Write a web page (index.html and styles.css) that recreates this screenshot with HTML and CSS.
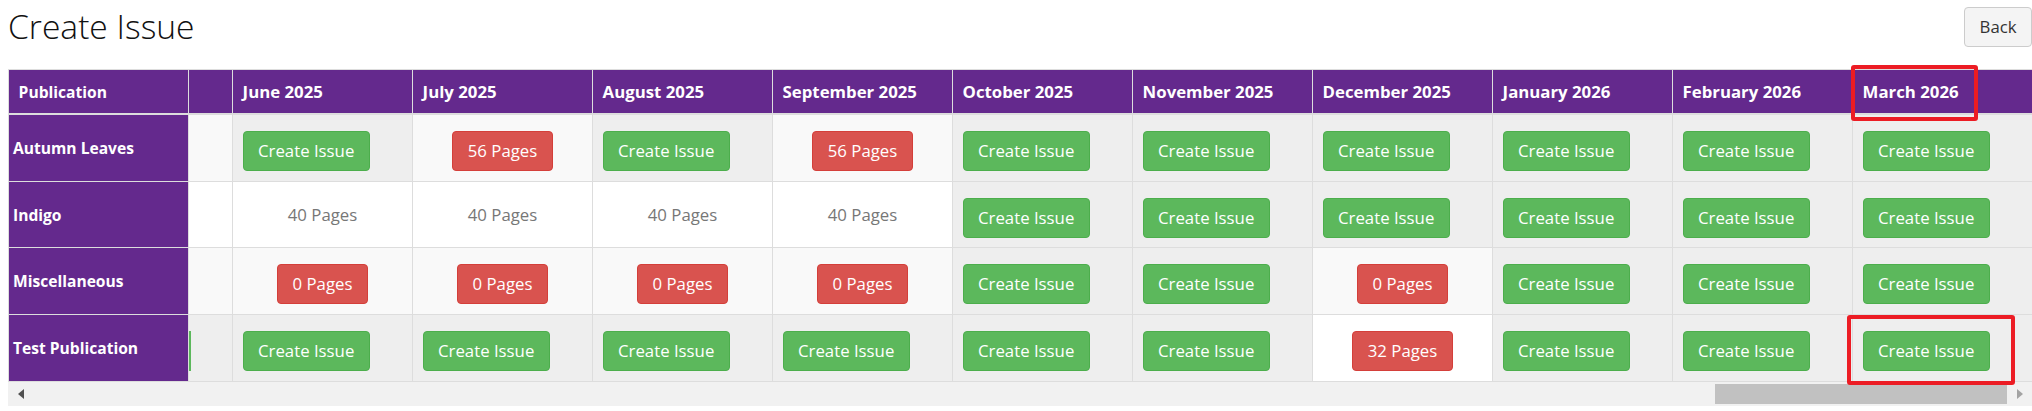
FILE: index.html
```html
<!DOCTYPE html>
<html lang="en">
<head>
    <meta charset="UTF-8">
    <meta name="viewport" content="width=device-width, initial-scale=1.0">
    <title>Create Issue</title>
    <link rel="stylesheet" href="styles.css">
</head>
<body>
    <div class="page">
        <div class="page-head">
            <h1>Create Issue</h1>
            <button class="btn btn-default">Back</button>
        </div>
        <div class="grid">
            <table class="issues">
                <colgroup>
                    <col class="col-pub">
                    <col class="col-cut">
                    <col span="10" class="col-month">
                </colgroup>
                <thead>
                    <tr>
                        <th class="pub">Publication</th>
                        <th class="cut"></th>
                        <th>June 2025</th>
                        <th>July 2025</th>
                        <th>August 2025</th>
                        <th>September 2025</th>
                        <th>October 2025</th>
                        <th>November 2025</th>
                        <th>December 2025</th>
                        <th>January 2026</th>
                        <th>February 2026</th>
                        <th class="marked">March 2026<span class="mark mark-head"></span></th>
                    </tr>
                </thead>
                <tbody>
                    <tr>
                        <th class="pub">Autumn Leaves</th>
                        <td class="cut"></td>
                        <td class="avail"><button class="btn btn-success">Create Issue</button></td>
                        <td><button class="btn btn-danger">56 Pages</button></td>
                        <td class="avail"><button class="btn btn-success">Create Issue</button></td>
                        <td><button class="btn btn-danger">56 Pages</button></td>
                        <td class="avail"><button class="btn btn-success">Create Issue</button></td>
                        <td class="avail"><button class="btn btn-success">Create Issue</button></td>
                        <td class="avail"><button class="btn btn-success">Create Issue</button></td>
                        <td class="avail"><button class="btn btn-success">Create Issue</button></td>
                        <td class="avail"><button class="btn btn-success">Create Issue</button></td>
                        <td class="avail"><button class="btn btn-success">Create Issue</button></td>
                    </tr>
                    <tr>
                        <th class="pub">Indigo</th>
                        <td class="cut"></td>
                        <td class="pages">40 Pages</td>
                        <td class="pages">40 Pages</td>
                        <td class="pages">40 Pages</td>
                        <td class="pages">40 Pages</td>
                        <td class="avail"><button class="btn btn-success">Create Issue</button></td>
                        <td class="avail"><button class="btn btn-success">Create Issue</button></td>
                        <td class="avail"><button class="btn btn-success">Create Issue</button></td>
                        <td class="avail"><button class="btn btn-success">Create Issue</button></td>
                        <td class="avail"><button class="btn btn-success">Create Issue</button></td>
                        <td class="avail"><button class="btn btn-success">Create Issue</button></td>
                    </tr>
                    <tr>
                        <th class="pub">Miscellaneous</th>
                        <td class="cut"></td>
                        <td><button class="btn btn-danger">0 Pages</button></td>
                        <td><button class="btn btn-danger">0 Pages</button></td>
                        <td><button class="btn btn-danger">0 Pages</button></td>
                        <td><button class="btn btn-danger">0 Pages</button></td>
                        <td class="avail"><button class="btn btn-success">Create Issue</button></td>
                        <td class="avail"><button class="btn btn-success">Create Issue</button></td>
                        <td><button class="btn btn-danger">0 Pages</button></td>
                        <td class="avail"><button class="btn btn-success">Create Issue</button></td>
                        <td class="avail"><button class="btn btn-success">Create Issue</button></td>
                        <td class="avail"><button class="btn btn-success">Create Issue</button></td>
                    </tr>
                    <tr>
                        <th class="pub">Test Publication</th>
                        <td class="cut avail"><span class="btn-tail"></span></td>
                        <td class="avail"><button class="btn btn-success">Create Issue</button></td>
                        <td class="avail"><button class="btn btn-success">Create Issue</button></td>
                        <td class="avail"><button class="btn btn-success">Create Issue</button></td>
                        <td class="avail"><button class="btn btn-success">Create Issue</button></td>
                        <td class="avail"><button class="btn btn-success">Create Issue</button></td>
                        <td class="avail"><button class="btn btn-success">Create Issue</button></td>
                        <td><button class="btn btn-danger">32 Pages</button></td>
                        <td class="avail"><button class="btn btn-success">Create Issue</button></td>
                        <td class="avail"><button class="btn btn-success">Create Issue</button></td>
                        <td class="avail marked"><button class="btn btn-success">Create Issue</button><span class="mark mark-cell"></span></td>
                    </tr>
                </tbody>
            </table>
            <div class="hscroll">
                <span class="hscroll-btn hscroll-left"></span>
                <div class="hscroll-track"><div class="hscroll-thumb"></div></div>
                <span class="hscroll-btn hscroll-right"></span>
            </div>
        </div>
    </div>
</body>
</html>
```

FILE: styles.css
```css
body {
    margin: 0;
    font-family: "Open Sans", Arial, sans-serif;
    font-size: 16.8px;
    line-height: 1.42857;
    color: #333;
    background: #fff;
}
.page {
    padding-left: 8px;
}
.page-head {
    display: flex;
    justify-content: space-between;
    align-items: flex-start;
    margin-bottom: 22px;
}
.page-head h1 {
    margin: 7.5px 0 0;
    font-size: 33.6px;
    font-weight: 300;
    line-height: 1.1;
    color: #111;
}
.btn {
    display: inline-block;
    padding: 7px 14.4px;
    font-family: inherit;
    font-size: 16.8px;
    line-height: 24px;
    border: 1px solid transparent;
    border-radius: 4px;
    color: #fff;
    cursor: pointer;
}
.btn-default {
    margin-top: 7px;
    background: #f4f4f4;
    border-color: #ccc;
    color: #333;
}
.btn-success {
    background: #5cb85c;
    border-color: #4cae4c;
}
.btn-danger {
    background: #d9534f;
    border-color: #d43f3a;
}
.issues {
    width: 100%;
    border-collapse: collapse;
    table-layout: fixed;
    border: 1px solid #ddd;
}
.col-pub,
.col-month {
    width: 180px;
}
.col-cut {
    width: 44px;
}
.issues th,
.issues td {
    padding: 9.6px;
    border: 1px solid #ddd;
    line-height: 24px;
    vertical-align: middle;
}
.issues th {
    background: #64298d;
    color: #fff;
    font-weight: 700;
    text-align: left;
}
.issues thead th {
    border-bottom-width: 2px;
}
.issues th.pub {
    font-size: 15.6px;
}
.issues tbody th {
    padding-left: 4px;
}
.issues tbody tr:nth-child(odd) {
    background: #f9f9f9;
}
.issues td {
    text-align: center;
}
.issues td.avail {
    background: #eee;
    text-align: left;
}
.issues .btn {
    margin-top: 6.4px;
}
.issues .pages {
    color: #777;
}
.btn-tail {
    display: block;
    width: 2px;
    height: 40px;
    margin: 6.4px 0 0 -9.6px;
    background: #5cb85c;
}
.marked {
    position: relative;
}
.mark {
    position: absolute;
    box-sizing: border-box;
    border: 4px solid #ec1c24;
    border-radius: 3px;
    pointer-events: none;
}
.mark-head {
    left: -2px;
    top: -5px;
    width: 127px;
    height: 56px;
}
.mark-cell {
    left: -6px;
    top: 0;
    width: 168px;
    height: 70px;
}
.hscroll {
    display: flex;
    height: 24px;
    background: #f1f1f1;
}
.hscroll-btn {
    width: 25px;
    display: flex;
    align-items: center;
    justify-content: center;
}
.hscroll-btn::before {
    content: "";
    border-top: 5.5px solid transparent;
    border-bottom: 5.5px solid transparent;
}
.hscroll-left::before {
    border-right: 6px solid #505050;
}
.hscroll-right::before {
    border-left: 6px solid #a3a3a3;
}
.hscroll-track {
    flex: 1;
    display: flex;
    justify-content: flex-end;
    padding: 2px 0;
}
.hscroll-thumb {
    width: 292px;
    background: #c1c1c1;
}
```
